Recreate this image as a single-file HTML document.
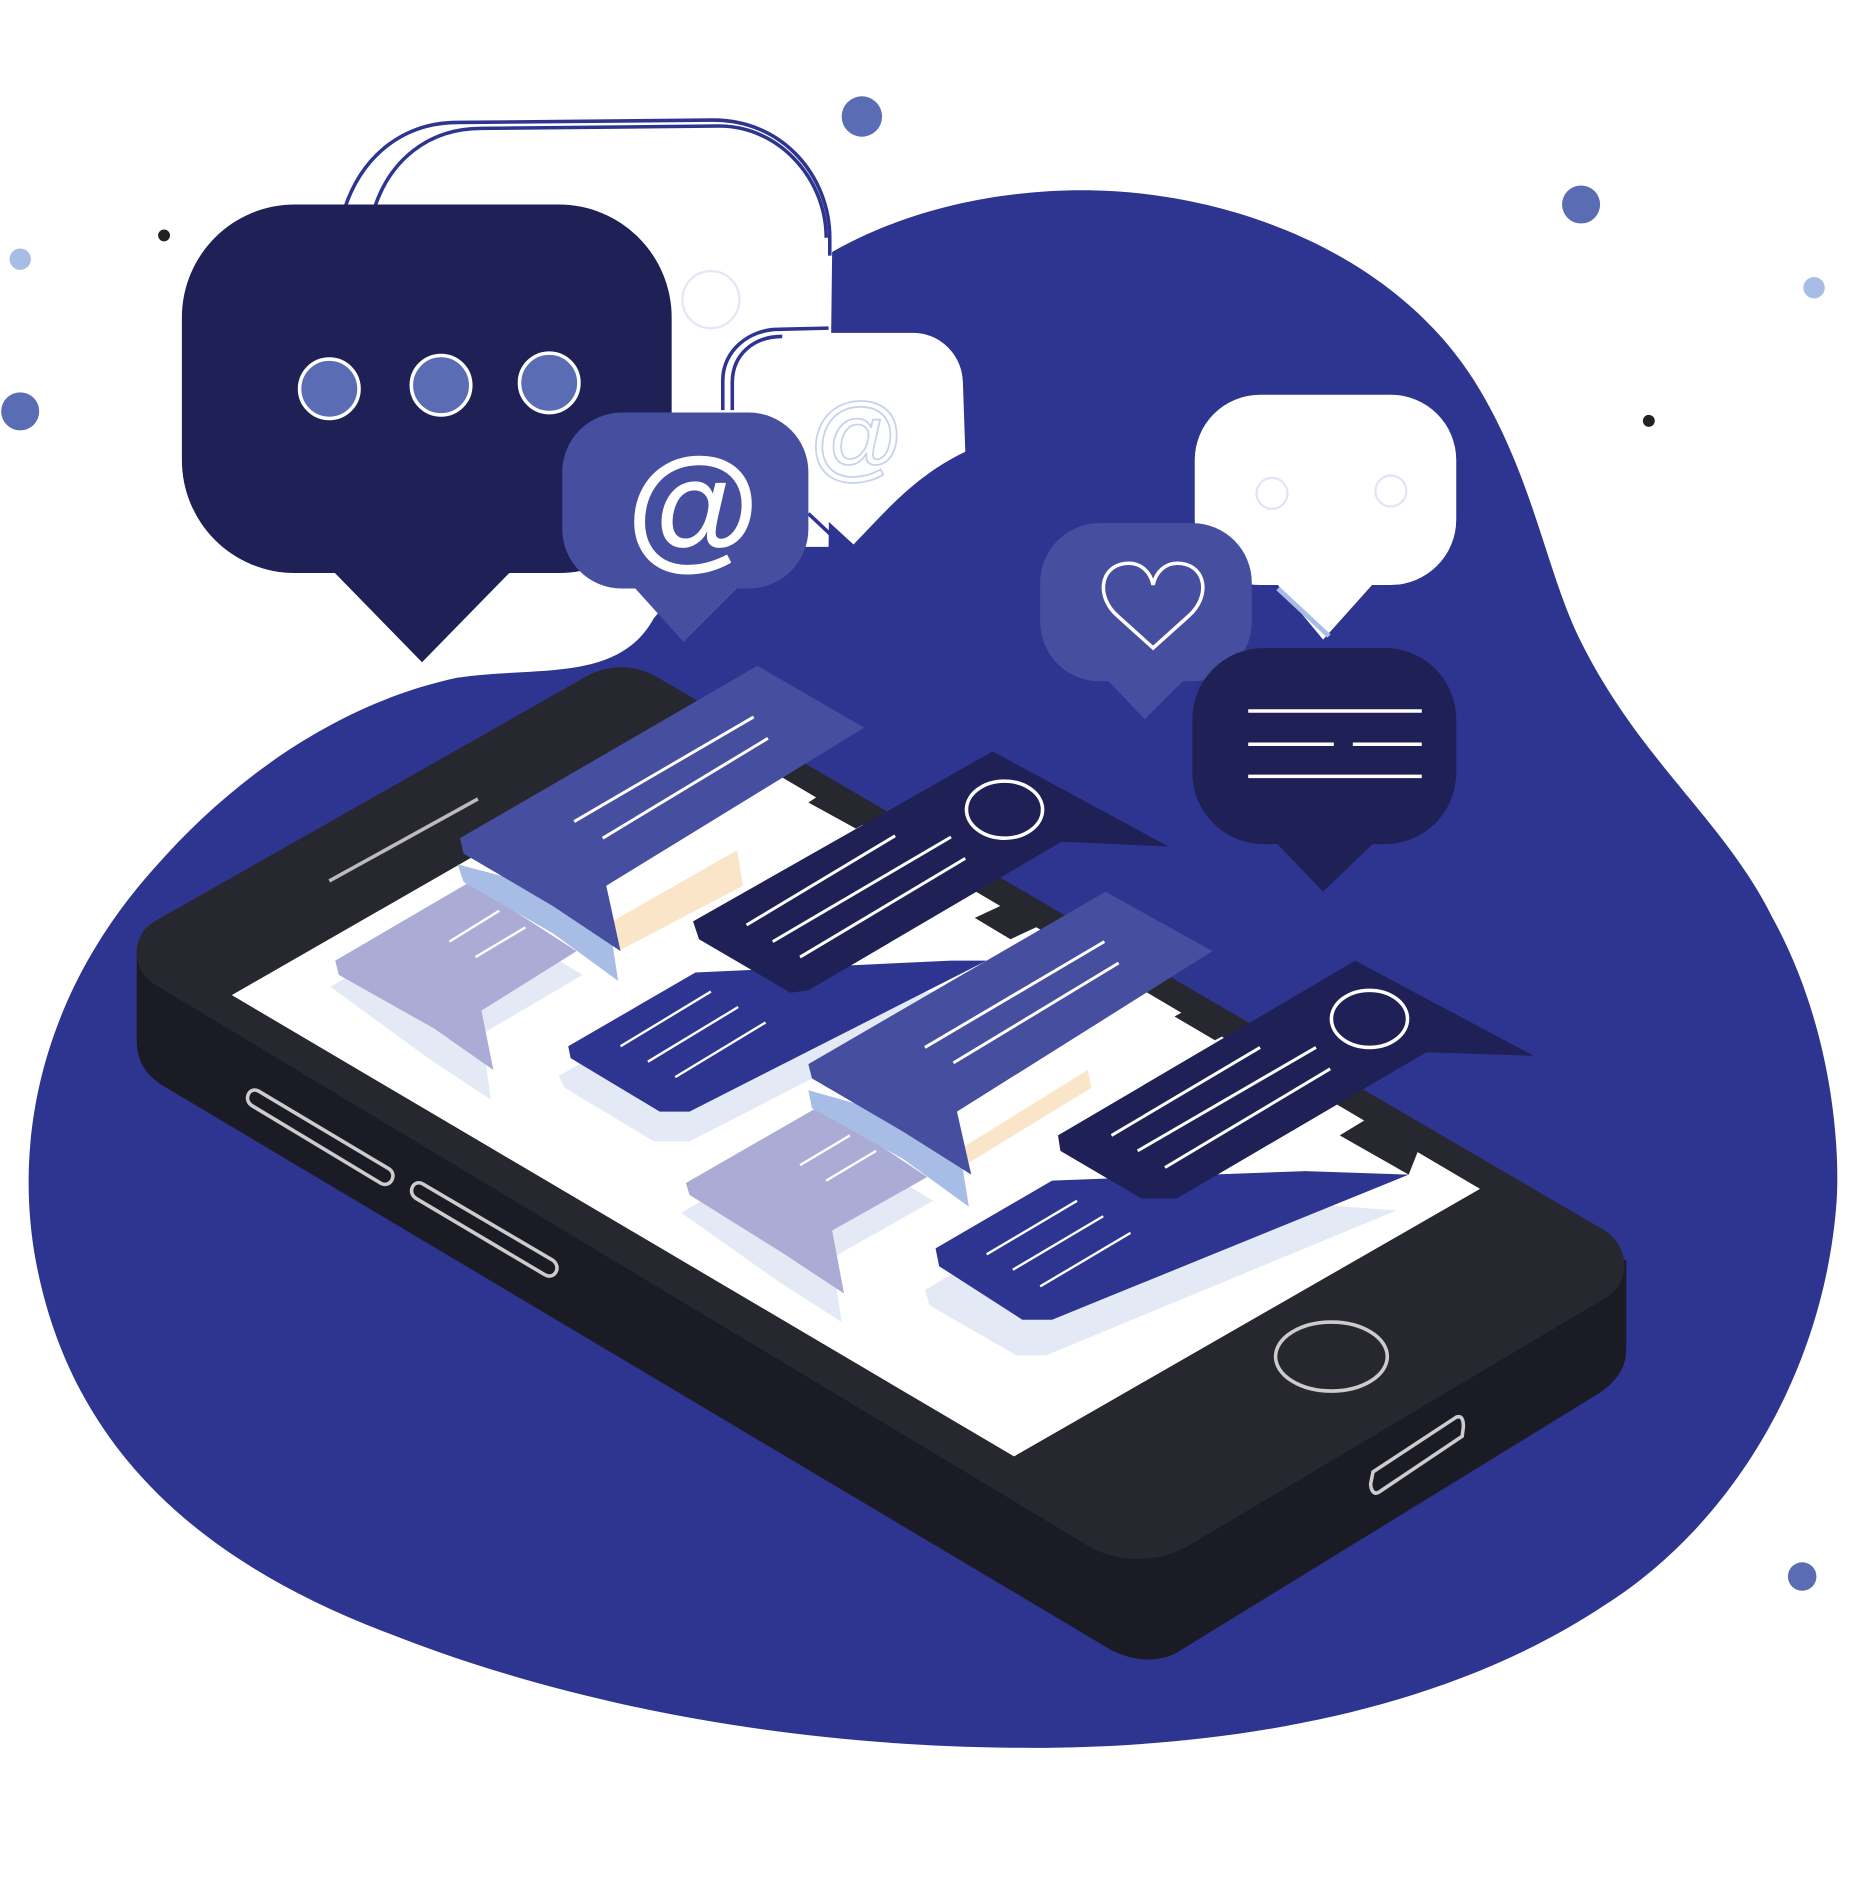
<!DOCTYPE html>
<html><head><meta charset="utf-8"><style>
html,body{margin:0;padding:0;background:#fff;width:1864px;height:1888px;overflow:hidden}
svg{display:block}
</style></head><body>
<svg width="1864" height="1888" viewBox="0 0 1568 1588" preserveAspectRatio="none" xmlns="http://www.w3.org/2000/svg">
<!-- big white outline bubble -->
<path d="M290,175 C305,130 340,103 385,103 L600,101 C660,101 698,150 698,200 L698,520 L290,520 Z" fill="#fff"/>
<path d="M290,175 C305,130 340,103 385,103 L600,101 C660,101 698,150 698,200 L698,215" fill="none" stroke="#2d3590" stroke-width="3"/>
<path d="M315,175 C328,135 360,108 405,108 L605,106 C655,106 695,150 695,200" fill="none" stroke="#2d3590" stroke-width="3"/>
<circle cx="598" cy="252" r="24" fill="none" stroke="#e3e8f5" stroke-width="2"/>
<!-- blob -->
<path d="M700,212 C770,172 850,160 910,160 C1030,160 1170,210 1240,320 C1290,400 1300,480 1330,540 C1380,640 1450,690 1490,770 C1540,860 1548,960 1545,1010 C1535,1150 1460,1280 1350,1350 C1200,1450 1000,1472 850,1470 C650,1468 470,1430 330,1375 C170,1315 60,1220 30,1060 C10,950 40,830 130,730 C200,650 290,590 385,570 C450,560 520,575 550,520 L600,460 L697,460 Z" fill="#2d3590"/>
<!-- dark bubble -->
<rect x="153" y="172" width="412" height="310" rx="95" fill="#1f2156"/>
<polygon points="270,470 355,557 445,465" fill="#1f2156"/>
<circle cx="277" cy="327" r="25" fill="#5a6cb3" stroke="#fff" stroke-width="3"/>
<circle cx="371" cy="324" r="25" fill="#5a6cb3" stroke="#fff" stroke-width="3"/>
<circle cx="462" cy="322" r="25" fill="#5a6cb3" stroke="#fff" stroke-width="3"/>
<!-- small white bubble -->
<path d="M622,320 C622,297 640,280 665,280 L768,280 C792,280 810,300 810,322 L812,380 C770,400 745,430 718,458 L682,425 L622,425 Z" fill="#fff"/>
<path d="M608,345 L608,320 C608,295 630,277 655,277 L697,276" fill="none" stroke="#2d3590" stroke-width="3"/>
<path d="M616,345 L616,322 C616,298 634,283 658,283" fill="none" stroke="#2d3590" stroke-width="3"/>
<path d="M680,432 L712,462" stroke="#2d3590" stroke-width="3"/>
<text x="680" y="395" font-family="Liberation Sans, sans-serif" font-size="80" fill="none" stroke="#c8d2ee" stroke-width="1.5">@</text>
<!-- @ bubble -->
<rect x="473" y="347" width="207" height="148" rx="50" fill="#464ea0"/>
<polygon points="530,490 575,540 625,490" fill="#464ea0"/>
<text x="583" y="465" text-anchor="middle" font-family="Liberation Sans, sans-serif" font-weight="bold" font-size="115" fill="#fff">@</text>
<!-- right white bubble -->
<path d="M1020,440 L1020,385 C1020,355 1040,337 1065,337" fill="none" stroke="#a8bde6" stroke-width="6"/>
<rect x="1005" y="332" width="220" height="160" rx="55" fill="#fff"/>
<polygon points="1065,480 1113,538 1165,480" fill="#fff"/>
<path d="M1075,495 L1118,535" stroke="#a8bde6" stroke-width="4"/>
<circle cx="1070" cy="415" r="13" fill="none" stroke="#e0e6f5" stroke-width="2"/>
<circle cx="1170" cy="413" r="13" fill="none" stroke="#e0e6f5" stroke-width="2"/>
<!-- heart bubble -->
<rect x="875" y="440" width="178" height="133" rx="50" fill="#464ea0"/>
<polygon points="925,565 963,605 1003,565" fill="#464ea0"/>
<path d="M970,545 L940,518 C922,502 925,477 946,474 C960,472 968,482 970,492 C972,482 980,472 994,474 C1015,477 1018,502 1000,518 Z" fill="none" stroke="#fff" stroke-width="3"/>
<!-- text bubble -->
<rect x="1003" y="545" width="222" height="165" rx="60" fill="#1f2156"/>
<polygon points="1065,700 1113,750 1165,700" fill="#1f2156"/>
<g stroke="#fff" stroke-width="3"><line x1="1050" y1="598" x2="1196" y2="598"/><line x1="1050" y1="626" x2="1122" y2="626"/><line x1="1138" y1="626" x2="1196" y2="626"/><line x1="1050" y1="653" x2="1196" y2="653"/></g>
<!-- phone -->
<path d="M115,800 L115,875 C115,895 125,905 135,912 L935,1388 C955,1398 975,1398 990,1390 L1345,1172 C1360,1162 1368,1150 1368,1135 L1368,1060 Z" fill="#1b1b25"/>
<path d="M130,775 L495,568 C515,558 535,560 550,568 L1350,1035 C1372,1050 1372,1080 1350,1092 L1000,1300 C975,1315 940,1315 915,1300 L130,828 C110,815 110,787 130,775 Z" fill="#272730"/>
<polygon points="195,837 587,612 1245,1000 853,1225" fill="#fff"/>
<line x1="277" y1="741" x2="402" y2="672" stroke="#bbb" stroke-width="3"/>
<g fill="none" stroke="#ccc" stroke-width="3">
<path d="M218,918 L327,983 C335,988 328,1000 320,995 L212,930 C204,925 210,913 218,918 Z"/>
<path d="M356,996 L465,1060 C473,1066 466,1077 458,1072 L350,1008 C342,1003 348,991 356,996 Z"/>
<ellipse cx="1120" cy="1141" rx="47" ry="29"/>
<path d="M1155,1238 L1225,1192 C1230,1190 1231,1195 1231,1200 L1230,1208 L1160,1255 C1155,1258 1153,1252 1153,1248 Z"/>
</g>
<!-- screen contents -->
<polygon points="680,675 703,660 745,683 720,697" fill="#272730"/>
<polygon points="820,772 863,752 893,770 850,790" fill="#272730"/>
<polygon points="988,855 1015,840 1050,860 1022,875" fill="#272730"/>
<polygon points="1127,955 1168,930 1200,950 1185,988" fill="#272730"/>
<!-- shadows -->
<polygon points="278,830 395,762 490,820 405,870 413,925 360,890" fill="#e4e9f6"/>
<polygon points="470,905 575,845 830,832 580,960 550,960 475,915" fill="#e4e9f6"/>
<polygon points="573,1020 690,952 785,1010 700,1058 708,1112 655,1078" fill="#e4e9f6"/>
<polygon points="778,1085 885,1022 1090,1012 1175,1018 880,1140 855,1140 782,1098" fill="#e4e9f6"/>
<polygon points="515,775 620,715 625,745 520,800" fill="#fbe5c8"/>
<polygon points="810,965 915,900 918,915 815,978" fill="#fbe5c8"/>
<!-- lavender bubbles -->
<polygon points="282,808 395,742 485,800 405,850 415,900 365,865 285,820" fill="#aaacd6"/>
<g stroke="#fff" stroke-width="2"><line x1="378" y1="792" x2="420" y2="766"/><line x1="400" y1="805" x2="442" y2="780"/></g>
<polygon points="577,995 690,930 780,990 700,1035 710,1088 660,1055 580,1005" fill="#aaacd6"/>
<g stroke="#fff" stroke-width="2"><line x1="673" y1="980" x2="715" y2="955"/><line x1="695" y1="993" x2="737" y2="968"/></g>
<!-- blue bubbles -->
<polygon points="478,880 585,818 800,808 830,808 580,935 555,935 480,890" fill="#2d3590"/>
<g stroke="#fff" stroke-width="2"><line x1="522" y1="880" x2="598" y2="834"/><line x1="545" y1="893" x2="621" y2="847"/><line x1="568" y1="906" x2="644" y2="860"/></g>
<polygon points="787,1050 885,993 1098,985 1185,988 885,1110 860,1110 790,1065" fill="#2d3590"/>
<g stroke="#fff" stroke-width="2"><line x1="830" y1="1055" x2="906" y2="1010"/><line x1="852" y1="1068" x2="928" y2="1023"/><line x1="875" y1="1082" x2="951" y2="1037"/></g>
<!-- purple bubbles with light-blue shadow -->
<polygon points="385,727 510,760 520,825 465,785 390,742" fill="#a8bde6"/>
<polygon points="387,705 637,560 727,612 510,745 522,800 465,762 390,718" fill="#464ea0"/>
<g stroke="#fff" stroke-width="2.5"><line x1="483" y1="691" x2="634" y2="603"/><line x1="507" y1="705" x2="646" y2="621"/></g>
<polygon points="680,917 805,952 815,1015 760,975 683,932" fill="#a8bde6"/>
<polygon points="680,895 930,750 1020,800 805,935 817,988 760,952 683,907" fill="#464ea0"/>
<g stroke="#fff" stroke-width="2.5"><line x1="778" y1="881" x2="929" y2="792"/><line x1="802" y1="894" x2="941" y2="810"/></g>
<!-- dark bubbles -->
<polygon points="583,775 835,632 983,712 893,708 680,833 665,835 588,790" fill="#1f2156"/>
<ellipse cx="845" cy="681" rx="32" ry="24" fill="none" stroke="#fff" stroke-width="3"/>
<g stroke="#fff" stroke-width="2.5"><line x1="628" y1="778" x2="753" y2="703"/><line x1="650" y1="792" x2="800" y2="704"/><line x1="673" y1="805" x2="812" y2="722"/></g>
<polygon points="890,955 1140,808 1290,888 1200,885 990,1008 960,1008 892,968" fill="#1f2156"/>
<ellipse cx="1152" cy="857" rx="32" ry="24" fill="none" stroke="#fff" stroke-width="3"/>
<g stroke="#fff" stroke-width="2.5"><line x1="935" y1="955" x2="1060" y2="881"/><line x1="957" y1="968" x2="1107" y2="881"/><line x1="980" y1="982" x2="1119" y2="899"/></g>
<!-- dots -->
<circle cx="725" cy="98" r="17" fill="#5a6cb3"/>
<circle cx="1330" cy="172" r="16" fill="#5a6cb3"/>
<circle cx="17" cy="346" r="16" fill="#5a6cb3"/>
<circle cx="1516" cy="1326" r="12" fill="#5a6cb3"/>
<circle cx="17" cy="218" r="9" fill="#a8bde6"/>
<circle cx="1526" cy="242" r="9" fill="#a8bde6"/>
<circle cx="138" cy="198" r="5" fill="#222"/>
<circle cx="1387" cy="354" r="5" fill="#222"/>
</svg>
</body></html>
